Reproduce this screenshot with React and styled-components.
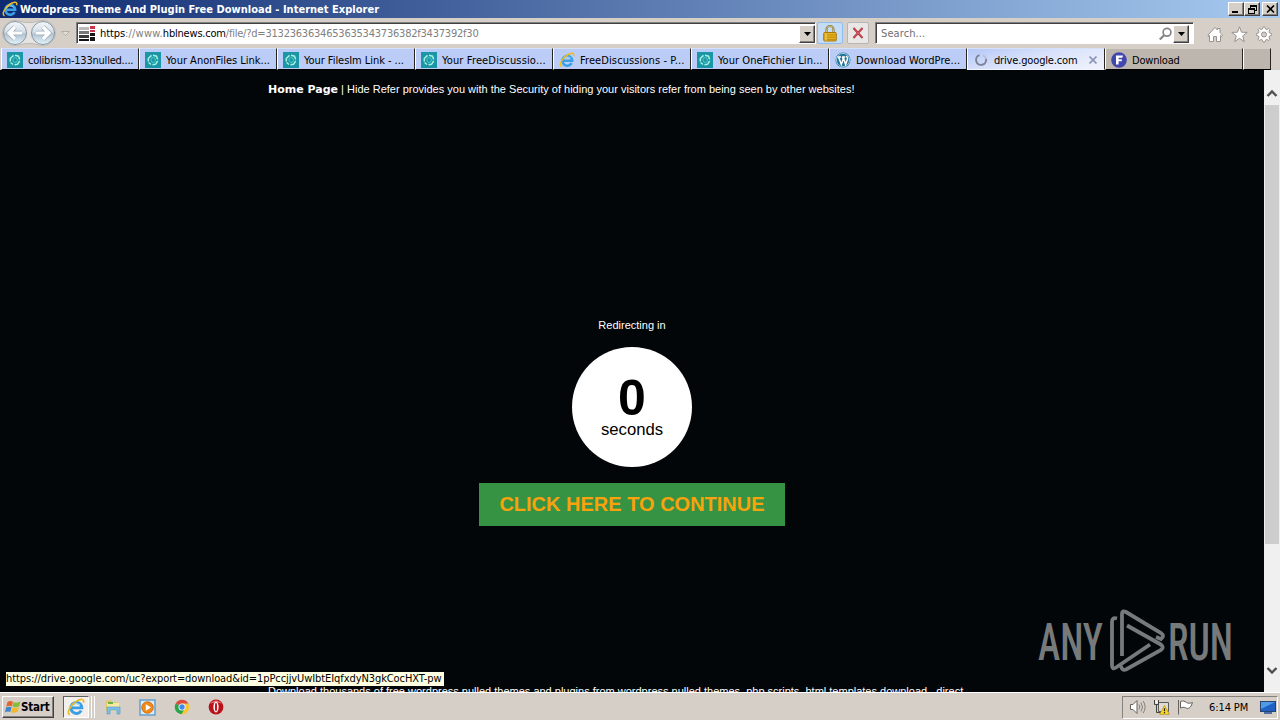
import React from "react";
import styled, { createGlobalStyle, css } from "styled-components";

const Global = createGlobalStyle`
  * { box-sizing: border-box; }
  body { margin: 0; overflow: hidden; background: #d6cfc8; }
`;

const uiFont = css`
  font-family: "DejaVu Sans Condensed", "DejaVu Sans", sans-serif;
  font-stretch: condensed;
  font-size: 11px;
  white-space: nowrap;
`;

const raised = css`
  background: #d6cfc8;
  border: 1px solid;
  border-color: #fff #404040 #404040 #fff;
  box-shadow: inset -1px -1px 0 #85817c;
`;

const Window = styled.div`
  ${uiFont}
  width: 1280px;
  height: 720px;
  display: flex;
  flex-direction: column;
  overflow: hidden;
  background: #d6cfc8;
  color: #000;
`;

const Label = styled.span`
  letter-spacing: ${(p) => p.$ls || 0}px;
  margin-left: ${(p) => p.$ml || 0}px;
  color: ${(p) => p.$color || "inherit"};
  white-space: pre;
`;

const TitleBar = styled.header`
  height: 18px;
  flex: none;
  display: flex;
  align-items: center;
  gap: 2px;
  padding: 0 2px;
  background: linear-gradient(90deg, #0e2a70 0%, #a6caf0 100%);
  color: #fff;
  font-weight: bold;
`;

const Grow = styled.div`
  flex: 1;
`;

const WindowButton = styled.button`
  ${raised}
  width: 16px;
  height: 14px;
  padding: 0;
  display: flex;
  align-items: center;
  justify-content: center;
  margin-left: ${(p) => p.$gap || 0}px;
`;

const WindowButtons = styled.div`
  display: flex;
`;

const Toolbar = styled.div`
  height: 30px;
  flex: none;
  display: flex;
  align-items: center;
  padding: 0 7px 0 1px;
`;

const Nav = styled.div`
  width: 75px;
  height: 30px;
  display: flex;
`;

const Field = styled.div`
  height: 22px;
  width: ${(p) => p.$w}px;
  margin-left: ${(p) => p.$ml || 0}px;
  display: flex;
  align-items: center;
  background: #fff;
  border: 1px solid;
  border-color: #808080 #fff #fff #808080;
  box-shadow: inset 1px 1px 0 #404040;
  padding: 1px 0 0 ${(p) => p.$pl}px;
`;

const DropButton = styled.button`
  ${raised}
  width: 16px;
  height: 18px;
  padding: 0;
  display: flex;
  align-items: center;
  justify-content: center;
  margin-right: ${(p) => p.$mr || 0}px;
`;

const ToolButton = styled.button`
  width: ${(p) => p.$w}px;
  height: 22px;
  padding: 0;
  margin-left: ${(p) => p.$ml}px;
  display: flex;
  align-items: center;
  justify-content: center;
  background: ${(p) => p.$bg};
  border: 1px solid ${(p) => p.$line};
  border-radius: 2px;
`;

const Commands = styled.div`
  display: flex;
  align-items: center;
  gap: 8px;
  margin: 3px 0 0 13px;
`;

const TabStrip = styled.nav`
  height: 22px;
  flex: none;
  display: flex;
  padding-left: 1px;
`;

const tabFill = {
  group: "#bbccf6",
  active: "linear-gradient(165deg, #b4c7f7 0%, #d9e2fb 45%, #f1f3fc 100%)",
  plain: "#bcb6af",
};

const Tab = styled.div`
  width: ${(p) => p.$w || 138}px;
  height: 22px;
  display: flex;
  align-items: center;
  gap: 5px;
  padding: 2px 0 0 5px;
  background: ${(p) => tabFill[p.$kind || "group"]};
  border: 1px solid;
  border-color: ${(p) => (p.$kind === "plain" ? "#d6cfc8" : "#d5e0fb")} #28241f #000 #fff;
  border-bottom-color: ${(p) => (p.$kind === "active" ? "#f1f3fc" : "#000")};
`;

const CloseSlot = styled.div`
  display: flex;
  margin-right: 7px;
`;

const Viewport = styled.div`
  position: relative;
  height: 622px;
  flex: none;
  display: flex;
`;

const Page = styled.main`
  width: 1264px;
  height: 622px;
  overflow: hidden;
  display: flex;
  flex-direction: column;
  align-items: center;
  padding-top: 12px;
  background: #020609;
  color: #fff;
  font: 11px/14px "Liberation Sans", Arial, sans-serif;
`;

const PageLine = styled.div`
  width: 728px;
  flex: none;
  height: 14px;
  margin-top: ${(p) => p.$mt || 0}px;
  white-space: pre;
  text-align: ${(p) => (p.$center ? "center" : "left")};
`;

const HomeLink = styled.a`
  font-family: "DejaVu Sans", sans-serif;
  font-weight: bold;
  font-size: 11px;
`;

const Countdown = styled.div`
  width: 120px;
  height: 120px;
  flex: none;
  margin-top: 15px;
  padding-top: 26px;
  border-radius: 50%;
  background: #fff;
  color: #000;
  text-align: center;
`;

const Count = styled.div`
  font-size: 50px;
  font-weight: bold;
  line-height: 50px;
`;

const Unit = styled.div`
  font-size: 16.7px;
  line-height: 14px;
`;

const Continue = styled.button`
  width: 306px;
  height: 43px;
  flex: none;
  margin-top: 16px;
  padding: 0;
  border: 0;
  background: #359343;
  color: #f9a20c;
  font: bold 20px/43px "Liberation Sans", Arial, sans-serif;
  white-space: nowrap;
`;

const ScrollBar = styled.div`
  width: 16px;
  height: 622px;
  background: #f0f0f0;
  display: flex;
  flex-direction: column;
  align-items: center;
  padding: 17px 0 15px;
  gap: 6px;
`;

const Thumb = styled.div`
  width: 14px;
  height: 439px;
  background: #cdcdcd;
`;

const StatusTip = styled.div`
  position: absolute;
  left: 6px;
  top: 602px;
  width: 438px;
  height: 14px;
  line-height: 14px;
  background: #ffffe1;
`;

const Watermark = styled.svg`
  position: absolute;
  left: 1036px;
  top: 538px;
`;

const TaskBar = styled.footer`
  height: 28px;
  flex: none;
  display: flex;
  align-items: center;
  padding: 1px 2px 0;
  background: #d6cfc8;
  border-top: 1px solid #fff;
`;

const StartButton = styled.button`
  ${raised}
  width: 52px;
  height: 22px;
  display: flex;
  align-items: center;
  padding: 0 0 0 2px;
  font: bold 11.5px "DejaVu Sans Condensed", "DejaVu Sans", sans-serif;
  font-stretch: condensed;
`;

const RunningApp = styled.div`
  width: 26px;
  height: 22px;
  margin-left: 9px;
  display: flex;
  align-items: center;
  justify-content: center;
  background: #f2efec;
  border: 1px solid;
  border-color: #606060 #fff #fff #606060;
`;

const StackEdge = styled.div`
  width: 3px;
  height: 22px;
  border-right: 1px solid #fff;
`;

const Launchers = styled.div`
  display: flex;
  align-items: center;
  gap: 18px;
  margin-left: 10px;
`;

const Tray = styled.div`
  width: 156px;
  height: 23px;
  display: flex;
  align-items: center;
  padding-left: 6px;
  border: 1px solid;
  border-color: #85817c #fff #fff #85817c;
`;

const TraySlot = styled.div`
  display: flex;
  margin-left: ${(p) => p.$ml || 0}px;
`;

const IELogo = ({ size = 16 }) => (
  <svg width={size} height={size} viewBox="0 0 16 16" fill="none">
    <path d="M12.600 11.200A4.900 4.900 0 1 1 13.200 8.800H4.600" stroke="#3a9fe4" strokeWidth="2.600" />
    <path d="M4.200 7.500A4.500 4.500 0 0 1 11.500 6.200" stroke="#9ddcf9" strokeWidth=".9" />
    <path d="M2.600 14.800C-.8 13.800 2.600 6.400 8.200 3C12.200.5 15.800.6 14.600 4.200" stroke="#eebc22" strokeWidth="1.500" />
  </svg>
);

const ForumIcon = () => (
  <svg width="16" height="16" viewBox="0 0 16 16" fill="none">
    <rect width="16" height="16" fill="#1b96a6" />
    <g stroke="#a5f0df" strokeWidth="1.500">
      <path d="M3.300 9.500L3.300 6.500L6.500 3.400M8 3.300L11.500 4.200L12.700 7.500M12.700 9L10.500 12.300L7.500 12.700M6 12.500L3.600 10.500" />
      <path d="M5.800 8L7 5.800H9.500L10.500 8L9.300 10.300H7L5.800 8" strokeWidth=".9" stroke="#55c9c4" />
    </g>
  </svg>
);

const WordPressIcon = () => (
  <svg width="16" height="16" viewBox="0 0 16 16" fill="none">
    <circle cx="8" cy="8" r="7.500" fill="#21759b" />
    <circle cx="8" cy="8" r="6.600" stroke="#d9eaf3" strokeWidth=".7" />
    <path d="M2.400 5H6M7 5H10.200M3.600 5L6.300 12.400L8.200 7.300L7.500 5M8.200 5L10.600 12.400L12.500 7C12.700 5.500 11.400 5 11.600 3.800" stroke="#fff" strokeWidth="1.500" />
  </svg>
);

const Spinner = () => (
  <svg width="16" height="16" viewBox="0 0 16 16" fill="none" strokeWidth="2">
    <path d="M6.500 3.100A5 5 0 1 0 13 7" stroke="#7d8396" />
    <path d="M13 7A5 5 0 0 0 10 3.400" stroke="#b7bfd7" />
  </svg>
);

const FIcon = () => (
  <svg width="16" height="16" viewBox="0 0 16 16">
    <circle cx="8" cy="8" r="7.800" fill="#4147ad" />
    <path d="M5 3.500H12L11.300 5.700H7.600V7.200H10.800V9.300H7.600V12.500H5Z" fill="#fff" />
  </svg>
);

const DownArrow = () => (
  <svg width="7" height="4" viewBox="0 0 7 4"><path d="M0 0H7L3.500 4Z" fill="#000" /></svg>
);

const NavButtons = () => (
  <svg width="75" height="30" viewBox="0 0 75 30" fill="none">
    <defs>
      <linearGradient id="orb" x1="0" y1="0" x2="0" y2="1">
        <stop offset="0" stopColor="#f4f7fa" />
        <stop offset=".45" stopColor="#d5dfe8" />
        <stop offset=".55" stopColor="#b4c3d0" />
        <stop offset="1" stopColor="#e4f4fa" />
      </linearGradient>
    </defs>
    <path d="M14 2.500C20 2.500 22 5 28 4.500C34 5 36 2.500 42 2.500A12.500 12.500 0 0 1 42 27.500C36 27.500 34 25 28 25.500C22 25 20 27.500 14 27.500A12.500 12.500 0 0 1 14 2.500Z" fill="#e6e3e0" stroke="#bdb8b4" />
    <circle cx="14" cy="15" r="11.500" fill="url(#orb)" stroke="#8799a7" />
    <circle cx="42" cy="15" r="11.500" fill="url(#orb)" stroke="#8799a7" />
    <g stroke="#9dafbc" strokeWidth="4.600"><path d="M8 15H21M14 9L8 15L14 21M35 15H48M42 9L48 15L42 21" /></g>
    <g stroke="#fff" strokeWidth="3.200"><path d="M8 15H21M14 9L8 15L14 21M35 15H48M42 9L48 15L42 21" /></g>
    <path d="M60.500 13.500H68.500L64.500 17.500Z" fill="#e4dfda" stroke="#b3aea8" />
  </svg>
);

const SiteIcon = () => (
  <svg width="16" height="16" viewBox="0 0 16 16" shapeRendering="crispEdges">
    <path d="M0 1H10V4H0Z" fill="#b9b9b9" />
    <path d="M0 5H10V8H0Z" fill="#777" />
    <path d="M0 9H10V12H0Z" fill="#3c3c3c" />
    <path d="M0 13H10V15H0Z" fill="#111" />
    <path d="M11 0H16V3H11ZM11 4H16V6H11Z" fill="#c9364c" />
    <path d="M11 7H16V10H11ZM11 11H16V15H11Z" fill="#151515" />
  </svg>
);

const LockIcon = () => (
  <svg width="14" height="17" viewBox="0 0 14 17" fill="none">
    <path d="M3.500 8V4.500A3.500 3.500 0 0 1 10.500 4.500V8" stroke="#8c7b3a" strokeWidth="2.200" />
    <path d="M3.500 8V4.500A3.500 3.500 0 0 1 10.500 4.500V8" stroke="#d8cc8a" strokeWidth=".8" />
    <rect x=".7" y="7.500" width="12.600" height="8.500" rx="1" fill="#e5b01d" stroke="#a87b0c" />
    <path d="M1.500 10H12.500M1.500 12.300H12.500M1.500 14.500H12.500" stroke="#b98910" strokeWidth=".8" />
    <path d="M3 8.500V15.500" stroke="#f8da6c" />
  </svg>
);

const StopIcon = () => (
  <svg width="12" height="12" viewBox="0 0 12 12" fill="none">
    <path d="M1.500 1L10.500 11M10.500 1L1.500 11" stroke="#a92c36" strokeWidth="2" />
    <path d="M1.500 1L10.500 11M10.500 1L1.500 11" stroke="#dc5f68" strokeWidth=".9" />
  </svg>
);

const SearchIcon = () => (
  <svg width="14" height="14" viewBox="0 0 14 14" fill="none" stroke="#858585">
    <circle cx="8" cy="5.300" r="3.900" strokeWidth="1.700" />
    <path d="M5.100 8.200L.8 12.500" strokeWidth="2.200" />
  </svg>
);

const CommandIcon = ({ d, w = 16 }) => (
  <svg width={w} height="17" viewBox="0 0 16 17" fill="#fff" stroke="#96918c" strokeWidth="1" strokeLinejoin="round">
    <path d={d} fillRule="evenodd" />
  </svg>
);

const gear = Array.from({ length: 32 }, (_, i) => {
  const r = i % 4 < 2 ? 7.7 : 5.7;
  const a = ((i - 0.5) * Math.PI) / 16;
  return `${i ? "L" : "M"}${(8 + r * Math.cos(a)).toFixed(2)} ${(8.5 + r * Math.sin(a)).toFixed(2)}`;
}).join("") + "ZM5.500 8.500A2.500 2.500 0 1 0 10.500 8.500A2.500 2.500 0 1 0 5.500 8.500Z";

const WindowsFlag = () => (
  <svg width="16" height="16" viewBox="0 0 16 16">
    <path d="M2.500 3C4.500 1.500 6 1.800 8 2.800L6.800 7.400C5 6.500 3.200 6.700 1.200 7.800Z" fill="#e8622c" />
    <path d="M8.700 3C10.700 4 12.500 3.800 15.500 2.500L14.200 7.200C12 8.500 9.500 8.600 7.500 7.600Z" fill="#86bb3b" />
    <path d="M1 8.600C3 7.500 4.800 7.400 6.600 8.200L5.300 13C3.500 12 2 12.300 0 13.300Z" fill="#3d86cf" />
    <path d="M7.300 8.500C9.200 9.300 11.500 9.200 14 8L12.700 12.800C10.500 14 8 14.200 6 13.200Z" fill="#f3b92b" />
  </svg>
);

const ExplorerIcon = () => (
  <svg width="16" height="16" viewBox="0 0 16 16">
    <path d="M1 2L6 1L7 3H13V12H1Z" fill="#e8c763" />
    <path d="M2 4H14V12H2Z" fill="#f7e9a4" />
    <path d="M3 3H8V5H3Z" fill="#67b44b" />
    <path d="M2 8H15V15H12V11H5V15H2Z" fill="#7cc0e6" stroke="#4f94c4" strokeWidth=".6" />
  </svg>
);

const PlayerIcon = () => (
  <svg width="17" height="17" viewBox="0 0 17 17">
    <rect x="1" y="1" width="15" height="15" fill="#d9e9f5" stroke="#5c9bd0" strokeWidth="1.400" />
    <circle cx="8.500" cy="8.500" r="5.700" fill="#f08a1d" stroke="#d36d0d" />
    <path d="M6.800 5.300L12 8.500L6.800 11.700Z" fill="#fff" />
  </svg>
);

const ChromeIcon = () => (
  <svg width="16" height="16" viewBox="0 0 16 16">
    <path d="M8 8L1.700 4.400A7.200 7.200 0 0 1 14.400 4.700H8Z" fill="#de4b3c" />
    <path d="M8 8L1.700 4.400A7.200 7.200 0 0 0 7.600 15.200L11 9.800Z" fill="#2ba24c" />
    <path d="M8 4.700H14.400A7.200 7.200 0 0 1 7.600 15.200L11 9.700Z" fill="#f6c82d" />
    <circle cx="8" cy="8" r="3.500" fill="#fff" />
    <circle cx="8" cy="8" r="2.700" fill="#4688e8" />
  </svg>
);

const OperaIcon = () => (
  <svg width="16" height="16" viewBox="0 0 16 16">
    <circle cx="8" cy="8" r="7.400" fill="#b8121a" />
    <path d="M2 5A7 7 0 0 1 14 5C11 3 5 3 2 5Z" fill="#ea6766" />
    <ellipse cx="8" cy="8" rx="2.600" ry="5.400" fill="#fff" />
    <ellipse cx="8" cy="8" rx="1.100" ry="4.300" fill="#c3161e" />
  </svg>
);

const SpeakerIcon = () => (
  <svg width="17" height="16" viewBox="0 0 17 16" fill="none" stroke="#66635f">
    <path d="M1.500 5.500H4L8 1.500V14.500L4 10.500H1.500Z" fill="#fff" />
    <path d="M10 5.500Q11.500 8 10 10.500M12 3.500Q15 8 12 12.500M14.200 2Q18 8 14.200 14" stroke="#85817c" />
  </svg>
);

const NetworkIcon = () => (
  <svg width="17" height="16" viewBox="0 0 17 16" fill="none">
    <path d="M5.500 3.500H15.500V12.500H5.500Z" fill="#dedbd6" stroke="#5d5b59" />
    <path d="M1.500 1V5.500H5.500V1M3.500 5.500V13.500H9" stroke="#44423f" />
    <path d="M2.500 1.500H4.500V4.500H2.500Z" fill="#fff" />
    <path d="M11.500 6.500L16.300 15.300H6.700Z" fill="#ffdd27" stroke="#b18b08" strokeWidth=".7" />
    <path d="M11.500 9.300V12.300M11.500 13V14.300" stroke="#222" strokeWidth="1.300" />
  </svg>
);

const FlagIcon = () => (
  <svg width="17" height="16" viewBox="0 0 17 16">
    <path d="M1.500 1V15.500M3.500 2.500C6 1.500 7.500 2 9.500 3.500C11 4.500 13 4.500 15.500 3.500L14.500 6C13 9.500 10.500 10 8.500 8.800C6.800 8 5.500 8.200 3.500 9Z" fill="#fff" stroke="#66635f" />
  </svg>
);

const MonitorIcon = () => (
  <svg width="16" height="15" viewBox="0 0 16 15">
    <rect x=".5" y="1.500" width="15" height="10" fill="#1f62c4" stroke="#28436e" />
    <path d="M1 2H15L1 9Z" fill="#4f9be8" />
    <path d="M4 12H12V14H4Z" fill="#506da0" />
  </svg>
);

const ScrollArrow = ({ d }) => (
  <svg width="12" height="12" viewBox="0 0 12 12" fill="none"><path d={d} stroke="#505050" strokeWidth="2.400" /></svg>
);

const tabs = [
  { label: "colibrism-133nulled....", ls: -0.22, icon: <ForumIcon /> },
  { label: "Your AnonFiles Link...", ls: 0, icon: <ForumIcon /> },
  { label: "Your FilesIm Link - ...", ls: -0.05, icon: <ForumIcon /> },
  { label: "Your FreeDiscussio...", ls: 0.15, icon: <ForumIcon /> },
  { label: "FreeDiscussions - P...", ls: 0.1, icon: <IELogo /> },
  { label: "Your OneFichier Lin...", ls: 0.04, icon: <ForumIcon /> },
  { label: "Download WordPre...", ls: 0.07, icon: <WordPressIcon /> },
];

export default function App() {
  return (
    <Window>
      <Global />
      <TitleBar>
        <IELogo />
        <Label $ls={0.02}>Wordpress Theme And Plugin Free Download - Internet Explorer</Label>
        <Grow />
        <WindowButtons>
          <WindowButton><svg width="8" height="8"><path d="M0 6H6V8H0Z" /></svg></WindowButton>
          <WindowButton>
            <svg width="9" height="9" viewBox="0 0 9 9" fill="none" stroke="#000" shapeRendering="crispEdges">
              <path d="M2.500 3V.5H8.500V5.500H6M2 1.500H9M.5 3.500H6.500V8.500H.5ZM0 4.500H7" />
            </svg>
          </WindowButton>
          <WindowButton $gap={2}>
            <svg width="9" height="8" viewBox="0 0 9 8"><path d="M1 .5L8 7.500M8 .5L1 7.500" stroke="#000" strokeWidth="1.600" /></svg>
          </WindowButton>
        </WindowButtons>
      </TitleBar>
      <Toolbar>
        <Nav><NavButtons /></Nav>
        <Field $w={740} $pl={2}>
          <SiteIcon />
          <Label $ls={-0.1} $ml={5}>https</Label>
          <Label $color="#808080" $ls={0.2}>://www.</Label>
          <Label $ls={-0.2}>hblnews.com</Label>
          <Label $color="#808080" $ls={-0.22}>/file/?d=3132363634653635343736382f3437392f30</Label>
          <Grow />
          <DropButton><DownArrow /></DropButton>
        </Field>
        <ToolButton $w={26} $ml={1} $bg="#c5dcf7" $line="#8fbdee"><LockIcon /></ToolButton>
        <ToolButton $w={22} $ml={4} $bg="#e9e6e6" $line="#b9b5b5"><StopIcon /></ToolButton>
        <Field $w={319} $ml={6} $pl={5}>
          <Label $color="#707070" $ls={0.1}>Search...</Label>
          <Grow />
          <SearchIcon />
          <DropButton $mr={4}><DownArrow /></DropButton>
        </Field>
        <Commands>
          <CommandIcon d="M1 9L8 1.500L10.500 4V2.500H13V6.500L15.500 9L14.500 10.500L13.500 9.500V15.500H9.500V10.500H6.500V15.500H2.500V9.500L1.500 10.500Z" />
          <CommandIcon w={17} d="M8 .8L10 6.200L15.700 6.400L11.200 9.900L12.800 15.600L8 12.300L3.200 15.600L4.800 9.900L.3 6.400L6 6.200Z" />
          <CommandIcon d={gear} />
        </Commands>
      </Toolbar>
      <TabStrip>
        {tabs.map((t) => (
          <Tab key={t.label}>{t.icon}<Label $ls={t.ls}>{t.label}</Label></Tab>
        ))}
        <Tab $kind="active">
          <Spinner />
          <Label $ls={-0.16}>drive.google.com</Label>
          <Grow />
          <CloseSlot>
            <svg width="8" height="8" viewBox="0 0 8 8">
              <path d="M.5 .5L7.500 7.500M7.500 .5L.5 7.500" stroke="#8e96b8" strokeWidth="1.700" />
            </svg>
          </CloseSlot>
        </Tab>
        <Tab $kind="plain"><FIcon /><Label $ls={-0.2}>Download</Label></Tab>
        <Tab $kind="plain" $w={28} />
      </TabStrip>
      <Viewport>
        <Page>
          <PageLine>
            <HomeLink>Home Page</HomeLink>
            <Label> | Hide Refer provides you with the Security of hiding your visitors refer from being seen by other websites!</Label>
          </PageLine>
          <PageLine $mt={222} $center>Redirecting in</PageLine>
          <Countdown>
            <Count>0</Count>
            <Unit>seconds</Unit>
          </Countdown>
          <Continue>CLICK HERE TO CONTINUE</Continue>
          <PageLine $mt={158}>
            <Label>Download thousands of free wordpress nulled themes and plugins from wordpress nulled themes, php scripts, html templates download , direct</Label>
          </PageLine>
        </Page>
        <ScrollBar>
          <ScrollArrow d="M1.500 9L6 4.500L10.500 9" />
          <Thumb />
          <Grow />
          <ScrollArrow d="M1.500 3L6 7.500L10.500 3" />
        </ScrollBar>
        <StatusTip><Label $ls={-0.085}>https://drive.google.com/uc?export=download&amp;id=1pPccjjvUwIbtEIqfxdyN3gkCocHXT-pw</Label></StatusTip>
        <Watermark width="200" height="66" viewBox="0 0 200 66" fill="none">
          <g fill="#777a7b" fontFamily="Roboto, sans-serif" fontSize="52" fontWeight="500">
            <text x="2" y="51.500" textLength="65" lengthAdjust="spacingAndGlyphs">ANY</text>
            <text x="132" y="51.500" textLength="65" lengthAdjust="spacingAndGlyphs">RUN</text>
          </g>
          <path d="M81 10.500Q76 9 76 14V57Q76 62 80 59.500L114 36.500M86 48V6Q86 2 90 4L125 25Q129 28 125 31L120 29M91 17.500L124 36Q129 39 125 42L90 61.500Q86 63 85 58" stroke="#777a7b" strokeWidth="3.800" />
        </Watermark>
      </Viewport>
      <TaskBar>
        <StartButton><WindowsFlag /><Label $ls={-0.2}>Start</Label></StartButton>
        <RunningApp><IELogo size={18} /></RunningApp>
        <StackEdge />
        <StackEdge />
        <Launchers><ExplorerIcon /><PlayerIcon /><ChromeIcon /><OperaIcon /></Launchers>
        <Grow />
        <Tray>
          <TraySlot><SpeakerIcon /></TraySlot>
          <TraySlot $ml={7}><NetworkIcon /></TraySlot>
          <TraySlot $ml={7}><FlagIcon /></TraySlot>
          <TraySlot $ml={15}><Label $ls={-0.1}>6:14 PM</Label></TraySlot>
          <TraySlot $ml={12}><MonitorIcon /></TraySlot>
        </Tray>
      </TaskBar>
    </Window>
  );
}
